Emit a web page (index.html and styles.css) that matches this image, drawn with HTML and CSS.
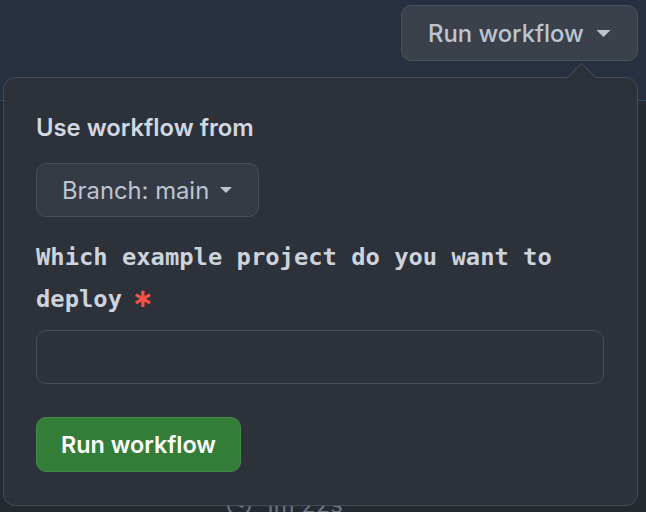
FILE: index.html
```html
<!DOCTYPE html>
<html lang="en">
<head>
<meta charset="utf-8">
<title>Run workflow</title>
<link rel="stylesheet" href="styles.css">
</head>
<body>
  <header class="topbar">
    <button class="btn btn-top" type="button">
      <span>Run workflow</span>
      <svg class="caret caret-lg" viewBox="0 0 16 8" aria-hidden="true"><path d="M0 0h16L8 8z"/></svg>
    </button>
  </header>

  <main class="content">
    <div class="duration">
      <svg class="clock" viewBox="0 0 24 24" aria-hidden="true"><circle cx="12" cy="12" r="10"/><path d="M12 6v6l4 2"/></svg>
      <span>1m 22s</span>
    </div>
  </main>

  <div class="popover">
    <h2 class="pop-title">Use workflow from</h2>
    <button class="btn btn-branch" type="button">
      <span>Branch: main</span>
      <svg class="caret caret-sm" viewBox="0 0 12 6" aria-hidden="true"><path d="M0 0h12L6 6z"/></svg>
    </button>
    <label class="field-label" for="project">Which example project do you want to deploy<span class="req">∗</span></label>
    <input class="field-input" id="project" type="text">
    <button class="btn btn-primary" type="button">Run workflow</button>
  </div>
</body>
</html>
```

FILE: styles.css
```css
* { box-sizing: border-box; }

html, body {
  margin: 0;
  padding: 0;
}

body {
  width: 646px;
  height: 512px;
  overflow: hidden;
  background: #252a31;
  font-family: Inter, "Noto Sans", "Liberation Sans", sans-serif;
  position: relative;
}

.topbar {
  height: 101px;
  background: #263041;
  border-bottom: 1px solid #2f4b72;
  display: flex;
  justify-content: flex-end;
  align-items: flex-start;
  padding: 5px 8px 0 0;
}

.btn {
  font-family: inherit;
  font-size: 23.8px;
  display: inline-flex;
  align-items: center;
  border-radius: 10px;
  cursor: pointer;
  white-space: nowrap;
}

.btn-top {
  height: 56px;
  width: 237px;
  padding: 0 26px;
  justify-content: space-between;
  background: #3b414b;
  border: 1px solid #4a515b;
  color: #bcc5d1;
  font-weight: 500;
}

.caret { fill: currentColor; display: block; flex: none; }
.caret-lg { width: 15px; height: 7px; }
.caret-sm { width: 12px; height: 6px; }

.content {
  padding: 389px 0 0 226px;
}

.duration {
  display: flex;
  align-items: center;
  gap: 12px;
  color: #6e7681;
  font-size: 23.8px;
}

.clock {
  width: 26px;
  height: 26px;
  fill: none;
  stroke: #6e7681;
  stroke-width: 2;
}

.popover {
  position: absolute;
  left: 3px;
  top: 77px;
  width: 635px;
  height: 429px;
  background: #2d3139;
  border: 1px solid #464d57;
  border-radius: 12px;
  padding: 34px 33px 33px 32px;
  display: flex;
  flex-direction: column;
  align-items: flex-start;
}

.popover::before {
  content: "";
  position: absolute;
  left: 567px;
  top: -11px;
  width: 20px;
  height: 20px;
  background: #2d3139;
  border-top: 1px solid #464d57;
  border-left: 1px solid #464d57;
  transform: rotate(45deg);
}

.pop-title {
  margin: 0;
  font-size: 23.8px;
  line-height: 32px;
  font-weight: 600;
  color: #d1d8e1;
}

.btn-branch {
  margin-top: 19px;
  height: 54px;
  width: 223px;
  padding: 0 0 0 25px;
  gap: 11px;
  justify-content: flex-start;
  background: #353b44;
  border: 1px solid #474e58;
  color: #bcc5d1;
  font-weight: 400;
  font-size: 23.8px;
}

.field-label {
  margin-top: 19px;
  font-family: "DejaVu Sans Mono", "Liberation Mono", monospace;
  font-weight: bold;
  font-size: 23.8px;
  line-height: 42px;
  color: #ccd3dd;
  width: 100%;
}

.req {
  font-family: "DejaVu Sans", sans-serif;
  font-weight: bold;
  color: #f85149;
  margin-left: 10px;
  font-size: 26px;
  line-height: 1;
}

.field-input {
  margin-top: 10px;
  width: 568px;
  height: 54px;
  background: #2d3139;
  border: 1px solid #474e58;
  border-radius: 10px;
  font-size: 23.8px;
  color: #ccd3dd;
  padding: 0 14px;
  outline: none;
}

.btn-primary {
  margin-top: 33px;
  height: 55px;
  width: 205px;
  justify-content: center;
  background: #347d39;
  border: 1px solid #3f8b44;
  color: #ffffff;
  font-weight: 600;
  font-size: 23.4px;
}
```
